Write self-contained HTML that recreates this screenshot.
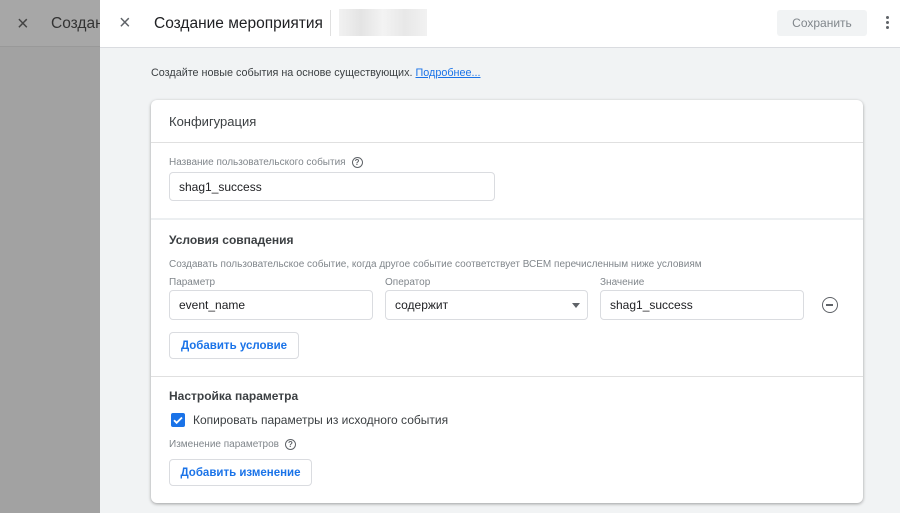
<!DOCTYPE html><html><head><meta charset="utf-8"><style>
*{box-sizing:border-box;margin:0;padding:0}
body{width:900px;height:513px;overflow:hidden;position:relative;font-family:"Liberation Sans",sans-serif;background:#f1f3f4;color:#202124}
.a{position:absolute;white-space:nowrap}
.inp{position:absolute;border:1px solid #dadce0;border-radius:4px;background:#fff;font-size:12px;padding-left:9px;line-height:28px;color:#202124}
.lbl{font-size:10px;color:#80868b}
.btn{position:absolute;border:1px solid #dadce0;border-radius:4px;background:#fff;color:#1a73e8;font-weight:bold;font-size:11.5px;text-align:center}
.hr{position:absolute;left:151px;width:712px;height:1px;background:#e0e0e0}
.q{display:inline-block;width:11px;height:11px;border:1.3px solid #5f6368;border-radius:50%;font-size:8px;line-height:9px;text-align:center;color:#5f6368;font-weight:bold;vertical-align:middle;margin-left:6px}
</style></head><body>
<div class="a" style="left:0;top:0;width:100px;height:513px;background:#a2a2a2"></div>
<div class="a" style="left:0;top:0;width:100px;height:47px;background:#a7a7a7;border-bottom:1px solid #999"></div>
<div class="a" style="left:17px;top:13px;font-size:20px;color:#444">×</div>
<div class="a" style="left:51px;top:15px;font-size:15.5px;color:#333">Создан</div>
<div class="a" style="left:100px;top:0;width:800px;height:48px;background:#fff;border-bottom:1px solid #dadce0"></div>
<div class="a" style="left:119px;top:12px;font-size:20px;color:#5f6368">×</div>
<div class="a" style="left:154px;top:15px;font-size:15.5px;color:#202124">Создание мероприятия</div>
<div class="a" style="left:330px;top:10px;width:1px;height:26px;background:#e0e0e0"></div>
<div class="a" style="left:339px;top:9px;width:88px;height:27px;background:linear-gradient(90deg,#eee,#ddd,#f0f0f0,#e2e2e2,#eee);opacity:.8"></div>
<div class="a" style="left:777px;top:10px;width:90px;height:26px;background:#f1f3f4;border-radius:3px;font-size:12px;color:#80868b;text-align:center;line-height:26px">Сохранить</div>
<div class="a" style="left:886px;top:16px;width:3px;height:3px;background:#5f6368;border-radius:50%;box-shadow:0 5px 0 #5f6368,0 10px 0 #5f6368"></div>
<div class="a" style="left:151px;top:67px;font-size:10.8px;color:#3c4043">Создайте новые события на основе существующих. <span style="color:#1a73e8;text-decoration:underline">Подробнее...</span></div>
<div class="a" style="left:151px;top:100px;width:712px;height:403px;background:#fff;border-radius:6px;box-shadow:0 1px 3px rgba(0,0,0,.35)"></div>
<div class="a" style="left:169px;top:114px;font-size:13px;color:#3c4043">Конфигурация</div>
<div class="hr" style="top:142px"></div>
<div class="a lbl" style="left:169px;top:157px">Название пользовательского события<span class="q">?</span></div>
<div class="inp" style="left:169px;top:172px;width:326px;height:29px">shag1_success</div>
<div class="hr" style="top:218px;height:2px;background:#eceff1"></div>
<div class="a" style="left:169px;top:233px;font-size:12px;font-weight:bold;color:#3c4043">Условия совпадения</div>
<div class="a lbl" style="left:169px;top:259px">Создавать пользовательское событие, когда другое событие соответствует ВСЕМ перечисленным ниже условиям</div>
<div class="a lbl" style="left:169px;top:277px">Параметр</div>
<div class="a lbl" style="left:385px;top:277px">Оператор</div>
<div class="a lbl" style="left:600px;top:277px">Значение</div>
<div class="inp" style="left:169px;top:290px;width:204px;height:30px">event_name</div>
<div class="inp" style="left:385px;top:290px;width:203px;height:30px">содержит<span style="position:absolute;right:7px;top:12px;border:4px solid transparent;border-top:5px solid #5f6368;border-bottom:0"></span></div>
<div class="inp" style="left:600px;top:290px;width:204px;height:30px">shag1_success</div>
<div class="a" style="left:822px;top:297px;width:16px;height:16px;border:1.5px solid #5f6368;border-radius:50%"><div style="position:absolute;left:3px;top:6px;width:7px;height:1.5px;background:#5f6368"></div></div>
<div class="btn" style="left:169px;top:332px;width:130px;height:27px;line-height:27px">Добавить условие</div>
<div class="hr" style="top:376px"></div>
<div class="a" style="left:169px;top:389px;font-size:12px;font-weight:bold;color:#3c4043">Настройка параметра</div>
<div class="a" style="left:171px;top:413px;width:14px;height:14px;background:#1a73e8;border-radius:2px"><svg width="14" height="14"><path d="M3 7.2l2.6 2.6L11 4.5" stroke="#fff" stroke-width="1.8" fill="none"/></svg></div>
<div class="a" style="left:193px;top:413px;font-size:12px;color:#3c4043">Копировать параметры из исходного события</div>
<div class="a lbl" style="left:169px;top:439px">Изменение параметров<span class="q">?</span></div>
<div class="btn" style="left:169px;top:459px;width:143px;height:27px;line-height:27px">Добавить изменение</div>
</body></html>
